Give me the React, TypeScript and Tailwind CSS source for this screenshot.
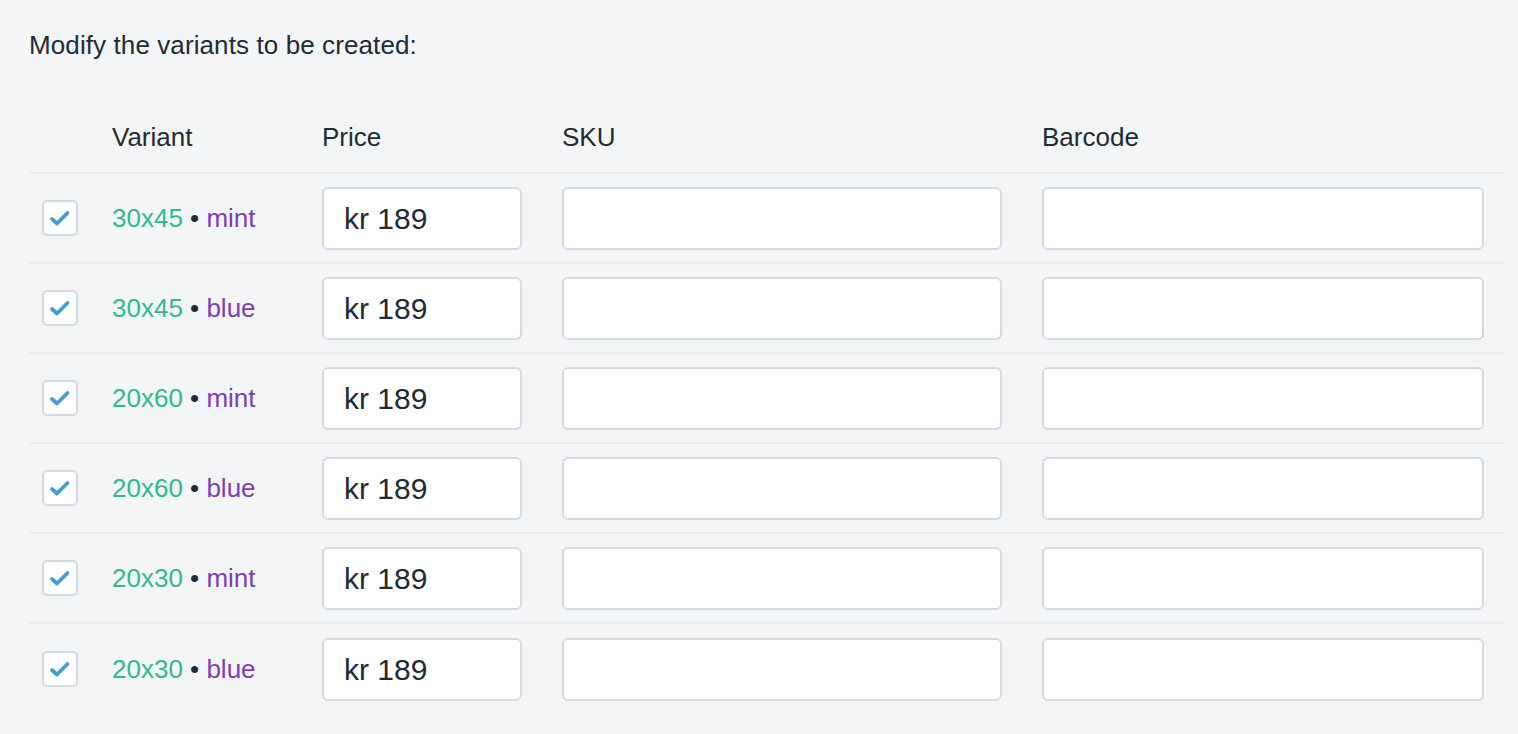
const variants = [
    { size: "30x45", color: "mint" },
    { size: "30x45", color: "blue" },
    { size: "20x60", color: "mint" },
    { size: "20x60", color: "blue" },
    { size: "20x30", color: "mint" },
    { size: "20x30", color: "blue" },
];

function CheckBox() {
    return (
        <div className="w-[36px] h-[36px] ml-[13px] rounded-[5px] border-2 border-[#d3dbe2] bg-white flex items-center justify-center">
            <svg width="24" height="24" viewBox="0 0 24 24" fill="none">
                <path d="M4 13 L9 17.5 L19.5 7" stroke="#479ccf" strokeWidth="3.8" strokeLinecap="round" strokeLinejoin="round" />
            </svg>
        </div>
    );
}

export default function App() {
    return (
        <div className="min-h-[734px] bg-[#f4f5f7] pl-[29px] pr-[14px] pt-[26px] text-[#212b36] [font-family:'Liberation_Sans',Arial,sans-serif]">
            <p className="text-[26px] leading-[39px] tracking-[0.1px]">Modify the variants to be created:</p>

            {/* header */}
            <div className="flex items-end h-[109px] pb-[15px] text-[26px] leading-[39px] border-b-2 border-[#e8eaed]">
                <div className="w-[83px]" />
                <div className="w-[210px]">Variant</div>
                <div className="w-[240px]">Price</div>
                <div className="w-[480px]">SKU</div>
                <div className="flex-1">Barcode</div>
            </div>

            {variants.map((v, i) => (
                <div
                    key={i}
                    className={`flex items-center h-[90px] ${i < variants.length - 1 ? "border-b-2 border-[#e8eaed]" : ""}`}
                >
                    <div className="w-[83px]">
                        <CheckBox />
                    </div>
                    <div className="w-[210px] text-[26px]">
                        <span className="text-[#32b98c]">{v.size}</span>
                        <span className="text-[#212b36]"> • </span>
                        <span className="text-[#7c3fb2]">{v.color}</span>
                    </div>
                    <div className="w-[240px]">
                        <div className="w-[200px] h-[63px] rounded-[6px] border-2 border-[#d3dbe2] bg-white flex items-center px-[20px] text-[30px] text-[#212b36]">
                            kr 189
                        </div>
                    </div>
                    <div className="w-[480px]">
                        <div className="w-[440px] h-[63px] rounded-[6px] border-2 border-[#d3dbe2] bg-white" />
                    </div>
                    <div className="flex-1">
                        <div className="w-[442px] h-[63px] rounded-[6px] border-2 border-[#d3dbe2] bg-white" />
                    </div>
                </div>
            ))}
        </div>
    );
}
